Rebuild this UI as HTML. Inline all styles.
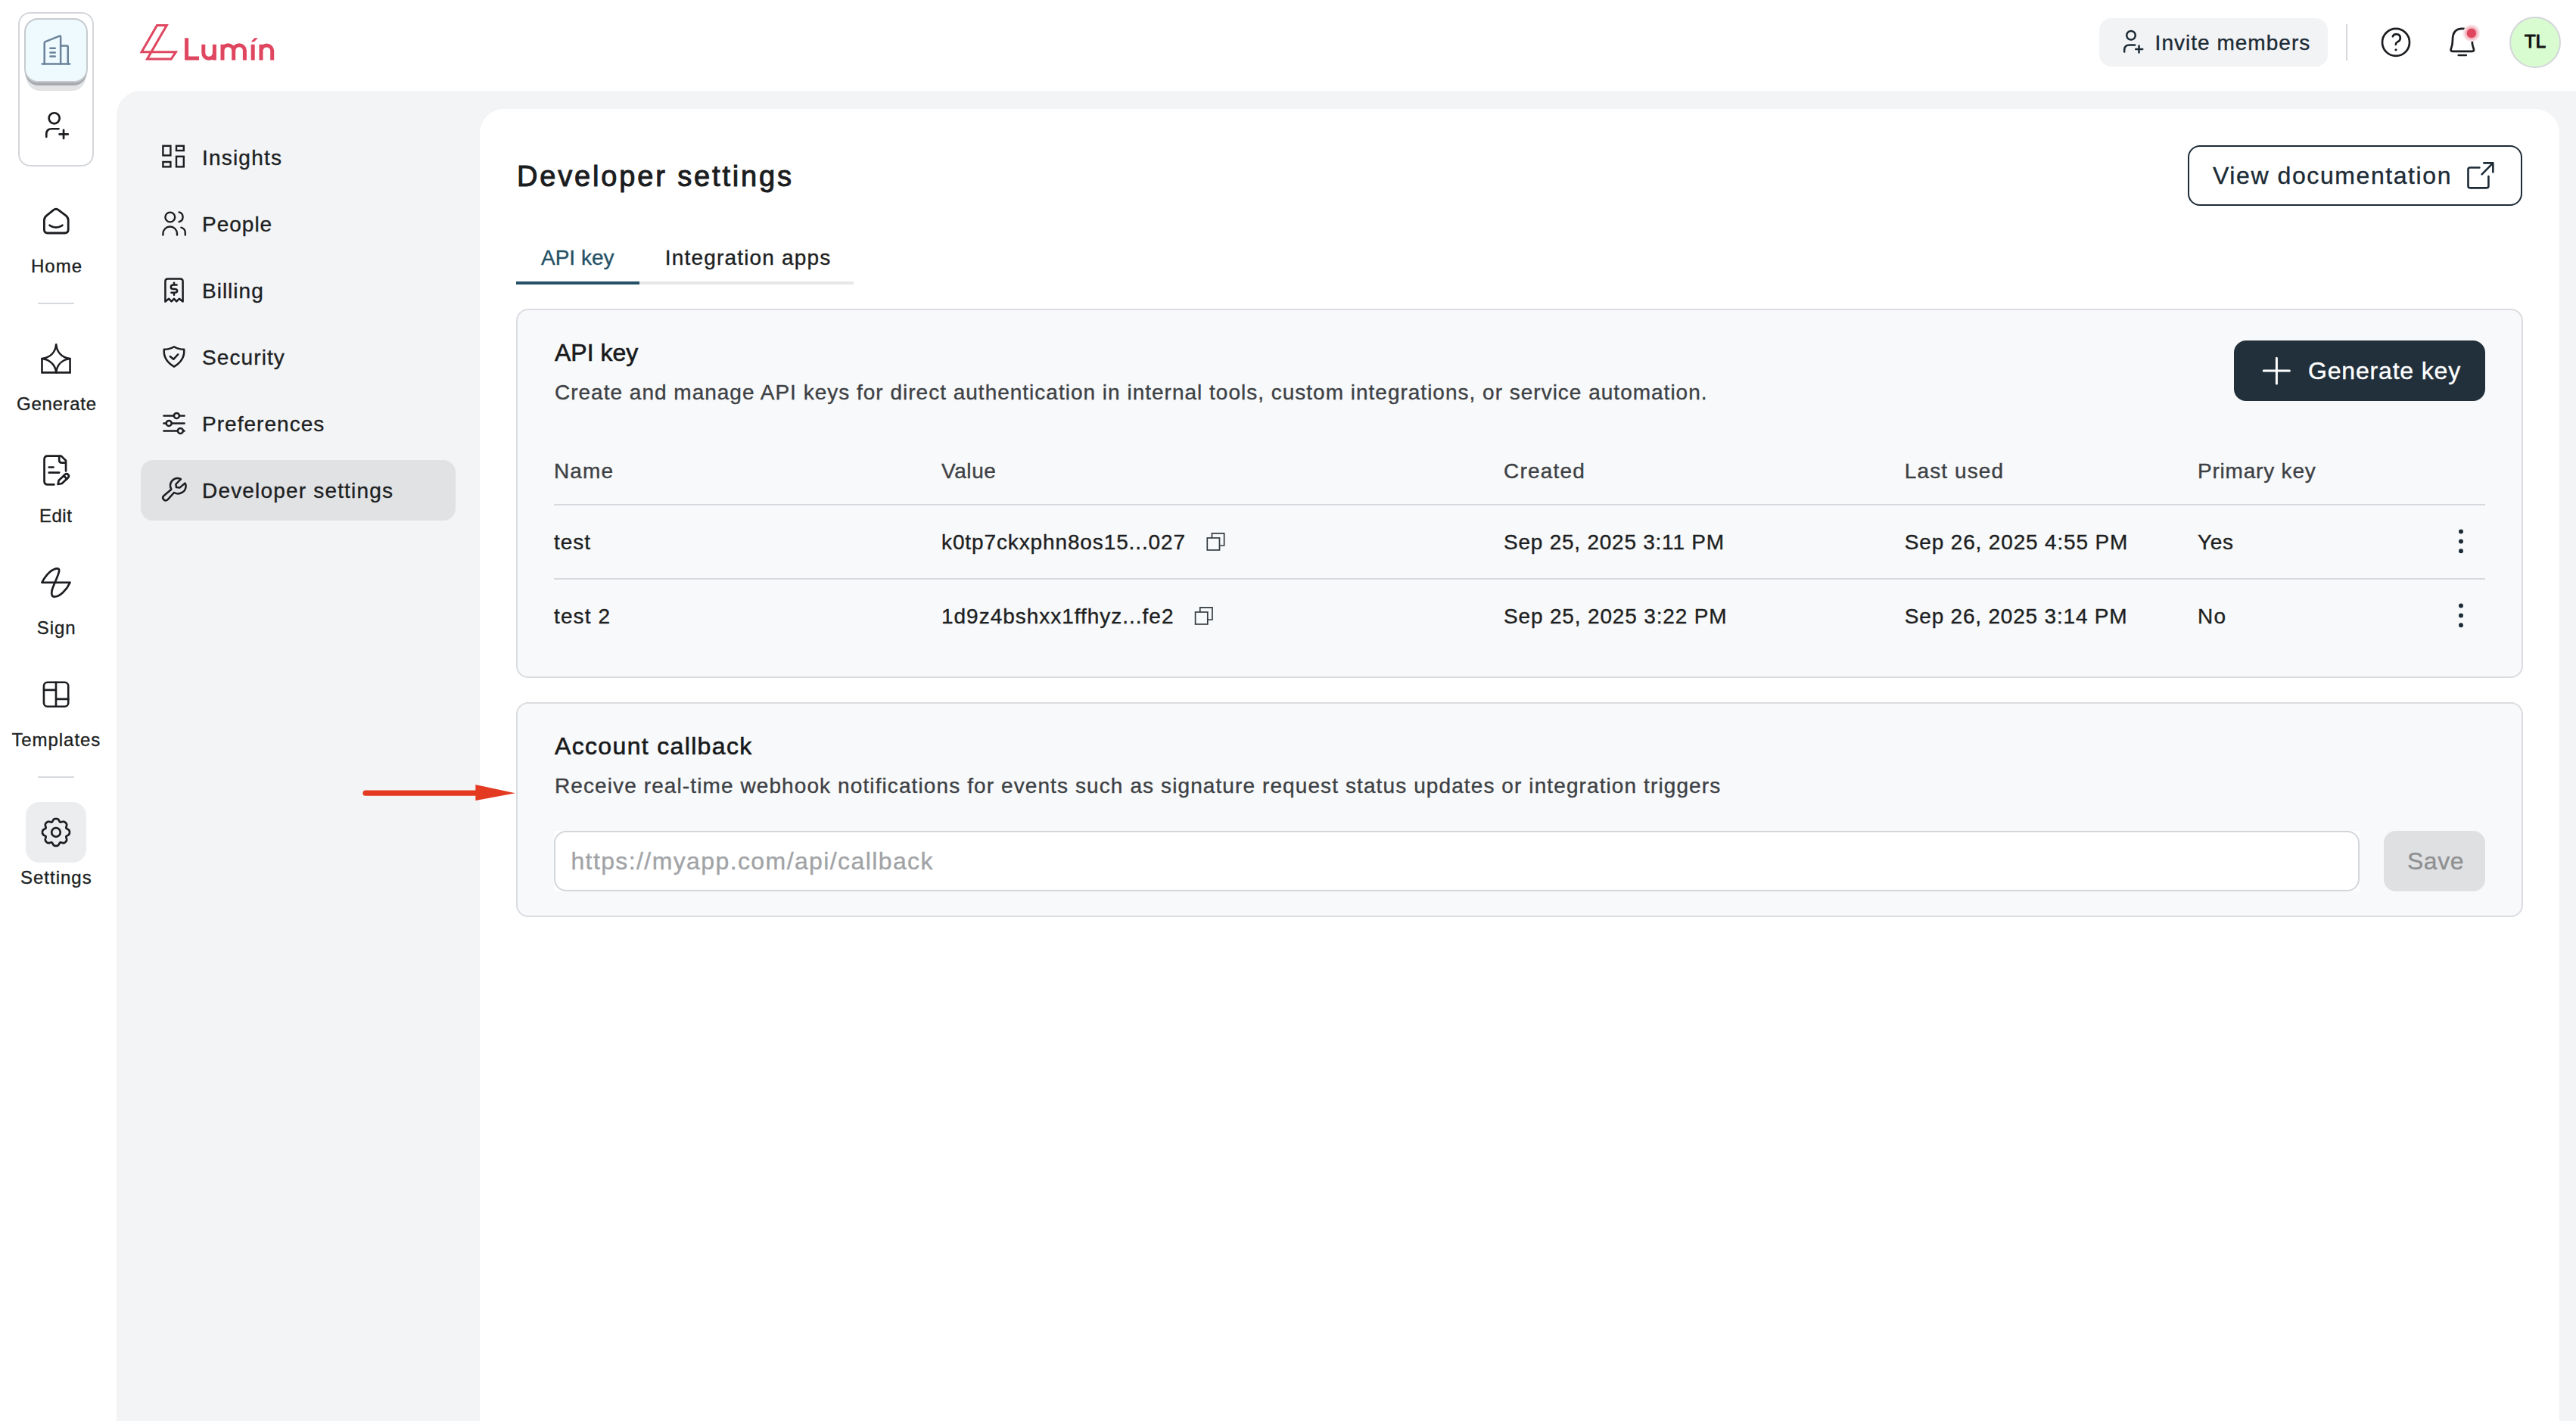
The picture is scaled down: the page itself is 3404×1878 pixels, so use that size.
<!DOCTYPE html>
<html><head><meta charset="utf-8">
<style>
html,body{margin:0;padding:0;background:#fff;overflow:hidden;}
#root{position:relative;width:1702px;height:939px;zoom:2;overflow:hidden;font-family:"Liberation Sans",sans-serif;color:#1d1f22;}
.a{position:absolute;}
.t{position:absolute;white-space:nowrap;line-height:1;-webkit-text-stroke-width:0.18px;-webkit-font-smoothing:antialiased;}
#ov{position:absolute;left:0;top:0;width:1702px;height:939px;pointer-events:none;}
</style></head><body><div id="root">

<!-- workspace switcher -->
<div class="a" style="left:12px;top:8px;width:48px;height:100px;border:1px solid #d3d6da;border-radius:8px;"></div>
<div class="a" style="left:17.5px;top:16px;width:39px;height:44px;border-radius:9px;background:#e2e3e5;"></div>
<div class="a" style="left:16.5px;top:14px;width:41px;height:42.5px;border-radius:9px;background:#a8acb0;"></div>
<div class="a" style="left:16px;top:12px;width:40px;height:40.5px;border:1px solid #c7cbcf;border-radius:9px;background:#eefafd;"></div>

<!-- gray panel -->
<div class="a" style="left:77px;top:60px;width:1700px;height:1000px;background:#f3f4f6;border-radius:16px 0 0 0;"></div>

<!-- active nav -->
<div class="a" style="left:93px;top:304px;width:208px;height:40px;background:#e1e2e4;border-radius:8px;"></div>

<!-- rail dividers -->
<div class="a" style="left:25px;top:200px;width:24px;height:1px;background:#d5d8dc;"></div>
<div class="a" style="left:25px;top:513px;width:24px;height:1px;background:#d5d8dc;"></div>
<!-- settings tile -->
<div class="a" style="left:17px;top:530px;width:40px;height:40px;background:#ecedef;border-radius:9px;"></div>

<!-- white card -->
<div class="a" style="left:317px;top:72px;width:1374px;height:1000px;background:#fff;border-radius:16px 16px 0 0;"></div>

<!-- top bar right -->
<div class="a" style="left:1387px;top:12px;width:151px;height:32px;background:#f2f3f5;border-radius:8px;"></div>
<div class="a" style="left:1550px;top:16px;width:1px;height:24px;background:#d5d8dc;"></div>
<div class="a" style="left:1658px;top:11px;width:32px;height:32px;border:1px solid #d3d6da;border-radius:50%;background:#d9fbd0;"></div>

<!-- view documentation -->
<div class="a" style="left:1445.5px;top:96px;width:219px;height:38px;border:1px solid #1c2b36;border-radius:8px;"></div>

<!-- tabs -->
<div class="a" style="left:341px;top:186px;width:223px;height:2px;background:#e6e7e9;"></div>
<div class="a" style="left:341px;top:186px;width:81.5px;height:2px;background:#245166;"></div>

<!-- API card -->
<div class="a" style="left:341px;top:204px;width:1324px;height:242px;background:#f8f9fa;border:1px solid #dadcdf;border-radius:8px;"></div>
<div class="a" style="left:1476px;top:225px;width:166px;height:40px;background:#21303b;border-radius:8px;"></div>
<div class="a" style="left:366px;top:333px;width:1276px;height:1px;background:#d6d9dd;"></div>
<div class="a" style="left:366px;top:382px;width:1276px;height:1px;background:#d6d9dd;"></div>

<!-- callback card -->
<div class="a" style="left:341px;top:464px;width:1324px;height:140px;background:#f8f9fa;border:1px solid #dadcdf;border-radius:8px;"></div>
<div class="a" style="left:366px;top:549px;width:1193px;height:40px;background:#fff;"></div>
<div class="a" style="left:366px;top:549px;width:1191px;height:38px;background:#fff;border:1px solid #d3d6da;border-radius:8px;"></div>
<div class="a" style="left:1575px;top:549px;width:67px;height:40px;background:#dfe0e2;border-radius:8px;"></div>

<!-- TEXT -->
<div class="t" style="left:20.5px;top:170px;font-size:12px;letter-spacing:0.5px;">Home</div>
<div class="t" style="left:11px;top:261px;font-size:12px;letter-spacing:0.36px;">Generate</div>
<div class="t" style="left:26px;top:335px;font-size:12px;letter-spacing:0.25px;">Edit</div>
<div class="t" style="left:24.4px;top:409px;font-size:12px;letter-spacing:0.45px;">Sign</div>
<div class="t" style="left:7.7px;top:483px;font-size:12px;letter-spacing:0.47px;">Templates</div>
<div class="t" style="left:13.5px;top:574px;font-size:12px;letter-spacing:0.5px;">Settings</div>

<div class="t" style="left:133.5px;top:97.7px;font-size:14px;letter-spacing:0.6px;">Insights</div>
<div class="t" style="left:133.5px;top:141.7px;font-size:14px;letter-spacing:0.5px;">People</div>
<div class="t" style="left:133.5px;top:185.7px;font-size:14px;letter-spacing:0.5px;">Billing</div>
<div class="t" style="left:133.5px;top:229.7px;font-size:14px;letter-spacing:0.55px;">Security</div>
<div class="t" style="left:133.5px;top:273.7px;font-size:14px;letter-spacing:0.52px;">Preferences</div>
<div class="t" style="left:133.5px;top:317.7px;font-size:14px;letter-spacing:0.59px;">Developer settings</div>

<div class="t" style="left:1423.8px;top:21.7px;font-size:14px;color:#1c2b36;letter-spacing:0.51px;">Invite members</div>
<div class="t" style="left:1668px;top:21.7px;font-size:12px;color:#111;letter-spacing:0.1px;-webkit-text-stroke:0.55px #111;">TL</div>

<div class="t" style="left:341.5px;top:106.8px;font-size:19px;color:#1b1c1e;letter-spacing:1.42px;-webkit-text-stroke:0.5px #1b1c1e;">Developer settings</div>
<div class="t" style="left:1462px;top:107.8px;font-size:16px;color:#1c2b36;letter-spacing:0.79px;">View documentation</div>

<div class="t" style="left:357.5px;top:163.5px;font-size:14px;color:#245166;letter-spacing:0.0px;">API key</div>
<div class="t" style="left:439.4px;top:163.5px;font-size:14px;color:#1d1f22;letter-spacing:0.59px;">Integration apps</div>

<div class="t" style="left:366.5px;top:224.9px;font-size:16px;color:#17191b;letter-spacing:0.0px;-webkit-text-stroke:0.3px #17191b;">API key</div>
<div class="t" style="left:366.5px;top:252.5px;font-size:14px;color:#3d4145;letter-spacing:0.5px;">Create and manage API keys for direct authentication in internal tools, custom integrations, or service automation.</div>
<div class="t" style="left:1525px;top:237.2px;font-size:16px;color:#fff;letter-spacing:0.41px;-webkit-text-stroke:0.2px #fff;">Generate key</div>

<div class="t" style="left:366px;top:304.7px;font-size:14px;color:#3d4145;letter-spacing:0.55px;">Name</div>
<div class="t" style="left:622px;top:304.7px;font-size:14px;color:#3d4145;letter-spacing:0.3px;">Value</div>
<div class="t" style="left:993.5px;top:304.7px;font-size:14px;color:#3d4145;letter-spacing:0.6px;">Created</div>
<div class="t" style="left:1258.4px;top:304.7px;font-size:14px;color:#3d4145;letter-spacing:0.55px;">Last used</div>
<div class="t" style="left:1452px;top:304.7px;font-size:14px;color:#3d4145;letter-spacing:0.4px;">Primary key</div>

<div class="t" style="left:366px;top:351.7px;font-size:14px;letter-spacing:0.5px;">test</div>
<div class="t" style="left:622px;top:351.7px;font-size:14px;letter-spacing:0.44px;">k0tp7ckxphn8os15...027</div>
<div class="t" style="left:993.5px;top:351.7px;font-size:14px;letter-spacing:0.38px;">Sep 25, 2025 3:11 PM</div>
<div class="t" style="left:1258.4px;top:351.7px;font-size:14px;letter-spacing:0.42px;">Sep 26, 2025 4:55 PM</div>
<div class="t" style="left:1452px;top:351.7px;font-size:14px;letter-spacing:0.3px;">Yes</div>

<div class="t" style="left:366px;top:400.7px;font-size:14px;letter-spacing:0.55px;">test 2</div>
<div class="t" style="left:622px;top:400.7px;font-size:14px;letter-spacing:0.49px;">1d9z4bshxx1ffhyz...fe2</div>
<div class="t" style="left:993.5px;top:400.7px;font-size:14px;letter-spacing:0.42px;">Sep 25, 2025 3:22 PM</div>
<div class="t" style="left:1258.4px;top:400.7px;font-size:14px;letter-spacing:0.4px;">Sep 26, 2025 3:14 PM</div>
<div class="t" style="left:1452px;top:400.7px;font-size:14px;letter-spacing:0.6px;">No</div>

<div class="t" style="left:366.5px;top:484.9px;font-size:16px;color:#17191b;letter-spacing:0.67px;-webkit-text-stroke:0.3px #17191b;">Account callback</div>
<div class="t" style="left:366.5px;top:512.45px;font-size:14px;color:#3d4145;letter-spacing:0.55px;">Receive real-time webhook notifications for events such as signature request status updates or integration triggers</div>
<div class="t" style="left:377.2px;top:561.15px;font-size:16px;color:#a1a3a6;letter-spacing:0.7px;">https://myapp.com/api/callback</div>
<div class="t" style="left:1590.5px;top:561px;font-size:16px;color:#8f9092;letter-spacing:0.25px;">Save</div>

<svg id="ov" viewBox="0 0 1702 939" fill="none" stroke-linecap="round" stroke-linejoin="round">
<!-- logo -->
<g stroke="#df4660" stroke-width="1.5" stroke-linejoin="miter">
<path d="M103.75 16.7 L110.15 16.7 L97.25 39 L113.1 39 L116.2 34.35 L93.55 34.35 Z"/>
</g>
<g stroke="#df4660" stroke-width="2.5" stroke-linecap="butt" stroke-linejoin="miter">
<path d="M123.3 25.1 V38.5 H131.5"/>
<path d="M134.4 29.4 V35 A3.65 3.65 0 0 0 141.7 35 M141.7 29.4 V39.75"/>
<path d="M147 39.75 V29.4 M147 33.5 A3.65 3.65 0 0 1 154.35 33.5 V39.75 M154.35 33.5 A3.65 3.65 0 0 1 161.7 33.5 V39.75"/>
<path d="M167.1 29.4 V39.75"/>
<path d="M172.5 39.75 V29.4 M172.5 33.5 A3.68 3.68 0 0 1 179.85 33.5 V39.75"/>
</g>
<path d="M165.8 27.6 L168.2 25.1 L170.4 25.1 L167.9 27.6 Z" fill="#df4660"/>

<!-- building -->
<g stroke="#6b829a" stroke-width="1.25">
<path d="M29.36 42.2 V28.4 Q29.36 27.8 29.9 27.6 L39.3 23.8 Q40.07 23.5 40.07 24.3 V42.2"/>
<path d="M40.07 30.27 H44.2 Q44.88 30.27 44.88 30.95 V42.2"/>
<path d="M27.9 42.22 H46.1"/>
<path d="M33.2 31.87 H36.4 M33.2 34.7 H36.4 M33.2 37.3 H36.4"/>
</g>
<!-- user plus rail -->
<g stroke="#1b1d20" stroke-width="1.35">
<circle cx="35.84" cy="78.16" r="3.53"/>
<path d="M30.63 90.4 V88.6 Q30.63 85.13 34.3 85.13 H38.76"/>
<path d="M39.28 88.7 H44.88 M42.03 85.97 V91.46"/>
</g>

<!-- rail icons -->
<g stroke="#1b1d20" stroke-width="1.4">
<path d="M29.2 145.6 Q29.2 143.6 30.8 142.4 L35.3 138.8 Q37 137.5 38.7 138.8 L43.5 142.4 Q45.1 143.6 45.1 145.6 L45.1 151.8 Q45.1 154 42.9 154 L31.4 154 Q29.2 154 29.2 151.8 Z"/>
<path d="M32.8 148.9 Q37 151.7 41.2 148.9"/>
</g>
<g stroke="#1b1d20" stroke-width="1.3">
<path d="M27.74 237 V246.17 H46.28 V237" stroke-linejoin="miter"/>
<path d="M37.1 227.6 C37.6 233 41 236.3 46.28 237 C41 237.7 37.6 241 37.1 246.17 C36.6 241 33 237.7 27.74 237 C33 236.3 36.6 233 37.1 227.6 Z"/>
</g>
<g stroke="#1b1d20" stroke-width="1.35">
<path d="M35.7 320.2 H31.5 Q29.28 320.2 29.28 318 V303.5 Q29.28 301.3 31.5 301.3 H40.4 L43.53 304.4 V311.2"/>
<path d="M39.1 301.5 V304 Q39.1 305.84 40.9 305.84 H43.3"/>
<path d="M32.34 308.76 H35.3 M32.34 312.28 H39.1"/>
<path d="M38.3 320 L38.8 317.5 L42.9 313.6 Q44 312.6 45 313.6 Q46 314.6 45 315.6 L40.9 319.5 Z"/>
<path d="M42.1 314.4 L44.2 316.5"/>
</g>
<g stroke="#1b1d20" stroke-width="1.35">
<path d="M27.7 384.9 L46.3 384.9 C44 390 39.5 394.3 36 394.3 C33.6 394.3 33.8 391 35 388 L37.3 382.5 C38.5 379.5 40.2 375.7 38 375.7 C34.5 375.7 30.5 379.5 27.7 384.9 Z"/>
</g>
<g stroke="#1b1d20" stroke-width="1.3">
<rect x="28.97" y="450.86" width="16.15" height="16.04" rx="2.4"/>
<path d="M36.99 450.86 V466.9 M28.97 455.93 H36.99 M36.99 461.94 H45.12"/>
</g>
<g stroke="#1b1d20" stroke-width="1.35">
<path d="M45.96 549.99 L45.96 550.22 L45.94 550.46 L45.91 550.69 L45.85 550.92 L45.76 551.14 L45.63 551.36 L45.45 551.56 L45.23 551.74 L44.98 551.91 L44.71 552.06 L44.44 552.20 L44.19 552.33 L43.97 552.46 L43.81 552.61 L43.71 552.77 L43.66 552.96 L43.68 553.18 L43.74 553.43 L43.82 553.70 L43.91 553.99 L44.00 554.28 L44.06 554.58 L44.08 554.86 L44.06 555.13 L44.01 555.37 L43.91 555.60 L43.79 555.80 L43.65 555.99 L43.50 556.16 L43.33 556.33 L43.16 556.50 L42.99 556.65 L42.80 556.79 L42.60 556.91 L42.37 557.01 L42.13 557.06 L41.86 557.08 L41.58 557.06 L41.28 557.00 L40.99 556.91 L40.70 556.82 L40.43 556.74 L40.18 556.68 L39.96 556.66 L39.77 556.71 L39.61 556.81 L39.46 556.97 L39.33 557.19 L39.20 557.44 L39.06 557.71 L38.91 557.98 L38.74 558.23 L38.56 558.45 L38.36 558.63 L38.14 558.76 L37.92 558.85 L37.69 558.91 L37.46 558.94 L37.22 558.96 L36.99 558.96 L36.76 558.96 L36.52 558.94 L36.29 558.91 L36.06 558.85 L35.84 558.76 L35.62 558.63 L35.42 558.45 L35.24 558.23 L35.07 557.98 L34.92 557.71 L34.78 557.44 L34.65 557.19 L34.52 556.97 L34.37 556.81 L34.21 556.71 L34.02 556.66 L33.80 556.68 L33.55 556.74 L33.28 556.82 L32.99 556.91 L32.70 557.00 L32.40 557.06 L32.12 557.08 L31.85 557.06 L31.61 557.01 L31.38 556.91 L31.18 556.79 L30.99 556.65 L30.82 556.50 L30.65 556.33 L30.48 556.16 L30.33 555.99 L30.19 555.80 L30.07 555.60 L29.97 555.37 L29.92 555.13 L29.90 554.86 L29.92 554.58 L29.98 554.28 L30.07 553.99 L30.16 553.70 L30.24 553.43 L30.30 553.18 L30.32 552.96 L30.27 552.77 L30.17 552.61 L30.01 552.46 L29.79 552.33 L29.54 552.20 L29.27 552.06 L29.00 551.91 L28.75 551.74 L28.53 551.56 L28.35 551.36 L28.22 551.14 L28.13 550.92 L28.07 550.69 L28.04 550.46 L28.02 550.22 L28.02 549.99 L28.02 549.76 L28.04 549.52 L28.07 549.29 L28.13 549.06 L28.22 548.84 L28.35 548.62 L28.53 548.42 L28.75 548.24 L29.00 548.07 L29.27 547.92 L29.54 547.78 L29.79 547.65 L30.01 547.52 L30.17 547.37 L30.27 547.21 L30.32 547.02 L30.30 546.80 L30.24 546.55 L30.16 546.28 L30.07 545.99 L29.98 545.70 L29.92 545.40 L29.90 545.12 L29.92 544.85 L29.97 544.61 L30.07 544.38 L30.19 544.18 L30.33 543.99 L30.48 543.82 L30.65 543.65 L30.82 543.48 L30.99 543.33 L31.18 543.19 L31.38 543.07 L31.61 542.97 L31.85 542.92 L32.12 542.90 L32.40 542.92 L32.70 542.98 L32.99 543.07 L33.28 543.16 L33.55 543.24 L33.80 543.30 L34.02 543.32 L34.21 543.27 L34.37 543.17 L34.52 543.01 L34.65 542.79 L34.78 542.54 L34.92 542.27 L35.07 542.00 L35.24 541.75 L35.42 541.53 L35.62 541.35 L35.84 541.22 L36.06 541.13 L36.29 541.07 L36.52 541.04 L36.76 541.02 L36.99 541.02 L37.22 541.02 L37.46 541.04 L37.69 541.07 L37.92 541.13 L38.14 541.22 L38.36 541.35 L38.56 541.53 L38.74 541.75 L38.91 542.00 L39.06 542.27 L39.20 542.54 L39.33 542.79 L39.46 543.01 L39.61 543.17 L39.77 543.27 L39.96 543.32 L40.18 543.30 L40.43 543.24 L40.70 543.16 L40.99 543.07 L41.28 542.98 L41.58 542.92 L41.86 542.90 L42.13 542.92 L42.37 542.97 L42.60 543.07 L42.80 543.19 L42.99 543.33 L43.16 543.48 L43.33 543.65 L43.50 543.82 L43.65 543.99 L43.79 544.18 L43.91 544.38 L44.01 544.61 L44.06 544.85 L44.08 545.12 L44.06 545.40 L44.00 545.70 L43.91 545.99 L43.82 546.28 L43.74 546.55 L43.68 546.80 L43.66 547.02 L43.71 547.21 L43.81 547.37 L43.97 547.52 L44.19 547.65 L44.44 547.78 L44.71 547.92 L44.98 548.07 L45.23 548.24 L45.45 548.42 L45.63 548.62 L45.76 548.84 L45.85 549.06 L45.91 549.29 L45.94 549.52 L45.96 549.76Z"/>
<circle cx="36.99" cy="549.99" r="2.9"/>
</g>

<!-- nav icons -->
<g stroke="#1b1d20" stroke-width="1.2" stroke-linejoin="miter">
<rect x="107.7" y="96.4" width="5" height="6.3"/>
<rect x="116.5" y="96.4" width="4.9" height="3.1"/>
<rect x="107.7" y="107" width="5" height="3.2"/>
<rect x="116.5" y="103.4" width="4.9" height="6.8"/>
</g>
<g stroke="#1b1d20" stroke-width="1.2">
<circle cx="112.4" cy="143.5" r="3.2"/>
<path d="M107.7 155.3 V154.4 A4.65 4.65 0 0 1 117 154.4 V155.3"/>
<path d="M118.3 140.2 A3.3 3.3 0 0 1 118.3 146.6"/>
<path d="M119.7 150.3 A3.6 3.6 0 0 1 122.4 154 V155.3"/>
</g>
<g stroke="#1b1d20" stroke-width="1.25">
<path d="M109.2 199.3 V185.9 Q109.2 184.2 110.9 184.2 H119.1 Q120.8 184.2 120.8 185.9 V199.3 L118.4 197.4 L116.6 199.2 L115 197.4 L113.3 199.2 L111.6 197.4 Z"/>
<path d="M116.8 188.3 H114.6 Q112.9 188.3 112.9 189.7 Q112.9 191 114.6 191 H115.4 Q117.1 191 117.1 192.3 Q117.1 193.4 115.4 193.4 H113.2 M115 186.9 V188.3 M115 193.4 V194.9"/>
</g>
<g stroke="#1b1d20" stroke-width="1.25">
<path d="M115 229.1 Q118 230.9 121.6 230.9 Q122.3 237.8 115 242.3 Q107.7 237.8 108.4 230.9 Q112 230.9 115 229.1 Z"/>
<path d="M112.4 235.5 L114.6 237.4 L117.6 234.2"/>
</g>
<g stroke="#1b1d20" stroke-width="1.25">
<path d="M108.2 274.7 H114.6 M118.8 274.7 H121.8 M108.2 279.7 H109.5 M113.7 279.7 H121.8 M108.2 284.7 H117.1 M121.3 284.7 H121.8"/>
<circle cx="116.7" cy="274.7" r="1.75"/>
<circle cx="111.6" cy="279.7" r="1.75"/>
<circle cx="119.2" cy="284.7" r="1.75"/>
</g>
<g stroke="#1b1d20" stroke-width="1.25">
<path d="M113.2 323.4 L108.2 327.6 Q106.9 328.9 108.2 330.2 Q109.5 331.4 110.9 330.1 L115 325.5 C118.5 327.5 123 325 122.8 320.8 Q122.7 319.8 122.2 319.3 L118.7 322.3 L116.5 322 L116.2 320 L119.5 316.6 C115 314.5 110.9 319 113.2 323.4 Z"/>
</g>

<!-- top bar icons -->
<g stroke="#1c2b36" stroke-width="1.25">
<circle cx="1408" cy="23.4" r="2.9"/>
<path d="M1403.6 34.2 V33 Q1403.6 29.75 1407 29.75 H1410.6"/>
<path d="M1411.1 32.5 H1415.6 M1413.26 30.2 V34.8"/>
</g>
<g stroke="#1b1d20" stroke-width="1.35">
<circle cx="1583" cy="27.95" r="9"/>
<path d="M1580.9 24.1 Q1581.5 22.6 1583.2 22.6 Q1585.9 22.6 1585.9 25.3 Q1585.9 26.9 1584 27.7 Q1582.9 28.3 1582.9 29.4"/>
</g>
<circle cx="1583" cy="32.9" r="0.8" fill="#1b1d20"/>
<defs><radialGradient id="glow"><stop offset="0.45" stop-color="#e0455e" stop-opacity="0.55"/><stop offset="1" stop-color="#e0455e" stop-opacity="0"/></radialGradient></defs>
<g stroke="#1b1d20" stroke-width="1.35">
<path d="M1624.4 36.5 H1629.4"/>
<path d="M1620.4 33.9 H1633.4 Q1634.9 33.9 1634.4 32.4 Q1633.3 29.8 1633.3 26.2 Q1633.3 18.96 1626.9 18.96 Q1620.5 18.96 1620.5 26.2 Q1620.5 29.8 1619.4 32.4 Q1618.9 33.9 1620.4 33.9 Z"/>
</g>
<circle cx="1632.94" cy="21.94" r="5.6" fill="#fff"/>
<circle cx="1632.94" cy="21.94" r="6" fill="url(#glow)"/>
<circle cx="1632.94" cy="21.94" r="3.05" fill="#e0455e"/>

<!-- external link -->
<g stroke="#1c2b36" stroke-width="1.3">
<path d="M1638.2 110.77 H1632 Q1630.74 110.77 1630.74 112 V122.9 Q1630.74 124.17 1632 124.17 H1642.9 Q1644.21 124.17 1644.21 122.9 V116.57"/>
<path d="M1639.8 115.2 L1647.17 107.7 M1641.15 107.7 H1647.17 V113.72"/>
</g>

<!-- generate plus -->
<g stroke="#fff" stroke-width="1.5">
<path d="M1504.2 236.6 V253.5 M1495.6 245 H1512.7"/>
</g>

<!-- copy icons -->
<g stroke="#353c42" stroke-width="0.85" stroke-linejoin="miter" stroke-linecap="butt">
<path d="M800.73 355.47 V352.48 H808.83 V360.49 H805.75"/>
<rect x="797.65" y="355.47" width="8.1" height="8.01"/>
<path d="M792.88 404.47 V401.48 H800.98 V409.49 H797.9"/>
<rect x="789.8" y="404.47" width="8.1" height="8.01"/>
</g>
<!-- kebabs -->
<g fill="#1c2d38">
<circle cx="1626" cy="351.25" r="1.5"/><circle cx="1626" cy="357.7" r="1.5"/><circle cx="1626" cy="364.18" r="1.5"/>
<circle cx="1626" cy="400.25" r="1.5"/><circle cx="1626" cy="406.7" r="1.5"/><circle cx="1626" cy="413.18" r="1.5"/>
</g>

<!-- red arrow -->
<path d="M241.5 524.1 H316" stroke="#e33a21" stroke-width="3.6"/>
<path d="M314.2 518.45 L340.45 524.1 L314.2 529.05 Z" fill="#e33a21"/>
</svg>
</div></body></html>
